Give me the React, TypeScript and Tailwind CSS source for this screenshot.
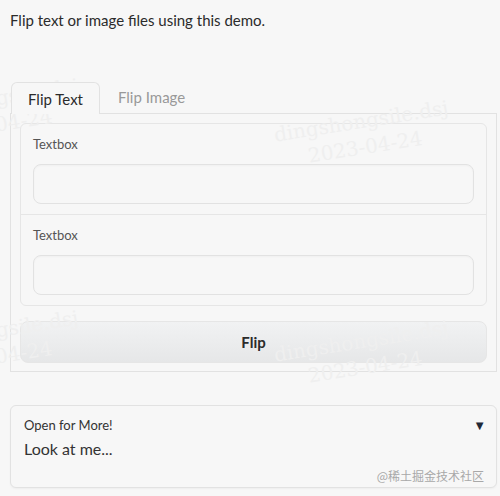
import React from 'react';

const Mark = ({ className }: { className: string }) => (
  <div className={`absolute pointer-events-none select-none text-[#efefef] font-['DejaVu_Serif',serif] text-[20px] leading-[26px] -rotate-[9deg] text-center ${className}`}>
    <div>dingshongsile.dsj</div>
    <div>2023-04-24</div>
  </div>
);

const Field = ({ label, first }: { label: string; first?: boolean }) => (
  <div className={`px-[12px] pt-[12px] pb-[10px] ${first ? 'border-b border-[#e6e6e6]' : ''}`}>
    <div className="text-[13px] leading-[16px] text-[#555]">{label}</div>
    <div className="mt-[12px] h-[40px] rounded-[8px] border border-[#e2e2e2] bg-[#f7f7f7] shadow-[inset_0_1px_2px_rgba(0,0,0,0.03)]" />
  </div>
);

export default function App() {
  return (
    <div className="relative min-h-[496px] overflow-hidden bg-[#f7f7f7] font-['Lato',sans-serif] text-[#333]">
      <p className="px-[10px] pt-[10px] text-[15px] leading-[20px] text-[#2b2b2b]">Flip text or image files using this demo.</p>

      <div className="mt-[51px] pl-[11px] flex items-end">
        <div className="h-[32px] px-[16px] rounded-t-[6px] border border-b-0 border-[#e2e2e2] bg-[#f7f7f7] text-[15px] leading-[32px] text-[#2b2b2b] relative z-10 -mb-px">
          Flip Text
        </div>
        <div className="h-[32px] px-[18px] text-[15px] leading-[32px] text-[#999]">Flip Image</div>
      </div>
      <div className="mx-[10px] w-[487px] border border-[#e2e2e2] px-[9px] pt-[9px] pb-[8px]">
        <div className="rounded-[6px] border border-[#e6e6e6]">
          <Field label="Textbox" first />
          <Field label="Textbox" />
        </div>
        <button className="mt-[15px] w-full h-[42px] rounded-[8px] border border-[#e6e6e6] bg-gradient-to-b from-[#f1f2f3] to-[#e6e7e8] text-[15px] font-bold text-[#2b2b2b]">
          Flip
        </button>
      </div>

      <div className="mt-[33px] mx-[10px] w-[487px] h-[83px] rounded-[6px] border border-[#e2e2e2] bg-[#f7f7f7] shadow-[0_1px_2px_rgba(0,0,0,0.04)] pl-[13px] pr-[10px] pt-[9px] relative">
        <div className="flex justify-between items-center">
          <span className="text-[13px] leading-[20px] text-[#333]">Open for More!</span>
          <span className="text-[13px] leading-[20px] text-[#1f2937]">▼</span>
        </div>
        <div className="mt-[2px] text-[16px] leading-[24px] text-[#333]">Look at me...</div>
        <div className="absolute right-[12px] bottom-[3px] text-[12px] leading-[16px] text-[#a8a8a8] font-['Noto_Sans_CJK_SC',sans-serif]">@稀土掘金技术社区</div>
      </div>

      <Mark className="left-[275px] top-[108px]" />
      <Mark className="-left-[95px] top-[86px]" />
      <Mark className="-left-[95px] top-[318px]" />
      <Mark className="left-[275px] top-[328px]" />
    </div>
  );
}
